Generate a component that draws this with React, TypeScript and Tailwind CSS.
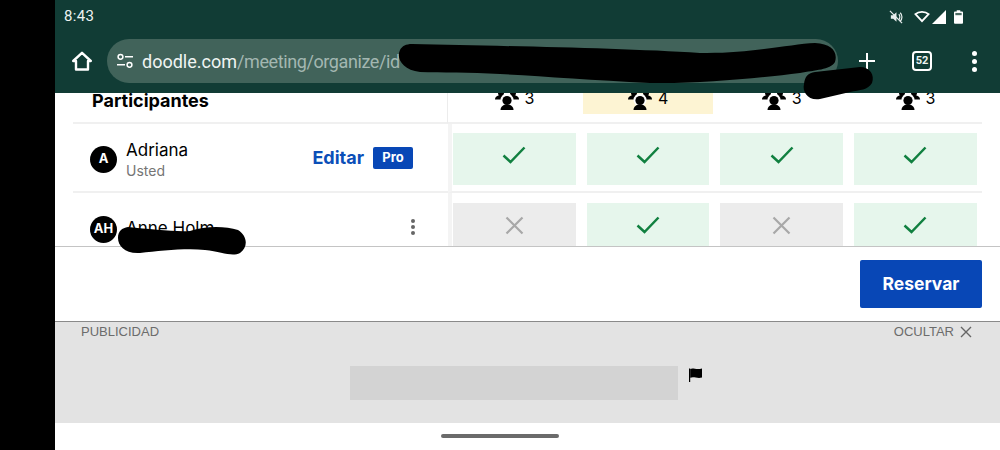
import { ReactNode } from "react";

const columns = [
  { count: 3, best: false },
  { count: 4, best: true },
  { count: 3, best: false },
  { count: 3, best: false },
];

function GroupIcon() {
  return (
    <svg width="24" height="20" viewBox="0 0 24 20" fill="#000">
      <circle cx="6" cy="3" r="3" />
      <circle cx="18" cy="3" r="3" />
      <path d="M0 9.500c0-3 3-4.500 6-4.500h12c3 0 6 1.500 6 4.500z" />
      <circle cx="12" cy="10" r="6.500" fill="#fff" />
      <circle cx="12" cy="10.500" r="4.600" />
      <path d="M5.500 20c0-3.500 3-5.500 6.500-5.500s6.500 2 6.500 5.500z" />
    </svg>
  );
}

function Check() {
  return (
    <svg width="24" height="20" viewBox="0 0 24 20" fill="none" stroke="#118040" strokeWidth="2.500">
      <path d="M1.500 10.500 L8.500 17 L22.500 2.500" />
    </svg>
  );
}

function Cross() {
  return (
    <svg width="19" height="19" viewBox="0 0 19 19" fill="none" stroke="#a8a8a8" strokeWidth="2.200">
      <path d="M1.500 1.500 L17.500 17.500 M17.500 1.500 L1.500 17.500" />
    </svg>
  );
}

function Cell({ yes }: { yes: boolean }) {
  return (
    <div className={`flex h-[52px] w-[122.67px] items-center justify-center pb-[8px] ${yes ? "bg-[#e6f6ec]" : "bg-[#ececec]"}`}>
      {yes ? <Check /> : <Cross />}
    </div>
  );
}

function Avatar({ children }: { children: ReactNode }) {
  return (
    <div className="flex h-[27px] w-[27px] shrink-0 items-center justify-center rounded-full bg-black text-[13px] font-bold text-white">
      {children}
    </div>
  );
}

function Row({ left, votes, top }: { left: ReactNode; votes: boolean[]; top: string }) {
  return (
    <div className="flex h-[69px] shrink-0">
      <div className="flex w-[375px] shrink-0 items-center border-b-2 border-[#f0f0f0] pl-[17px] pr-[35px]">{left}</div>
      <div className={`flex flex-1 gap-[11px] border-b-2 border-b-[#f0f0f0] border-l-[4px] border-l-[#f4f4f4] pl-[1px] ${top}`}>
        {votes.map((v, i) => (
          <Cell key={i} yes={v} />
        ))}
      </div>
    </div>
  );
}

function StatusIcons() {
  return (
    <div className="flex items-center gap-[2px]">
      <svg width="14" height="14" viewBox="0 0 15 15" fill="none" stroke="#e8eeee" strokeWidth="1.300" className="mr-[9px]">
        <path d="M1 1l13 13" />
        <path d="M2 5.500h2.500L8 2.500v10L4.500 9.500H2z" fill="#e8eeee" stroke="none" />
        <path d="M10.500 4.500c1.500 1.500 1.500 4.500 0 6M12 3c2.500 2.500 2.500 6.500 0 9" />
      </svg>
      <svg width="16" height="13" viewBox="0 0 17 13" fill="#113c35" stroke="#fff" strokeWidth="2">
        <path d="M1.500 4 C5 .8 12 .8 15.500 4 L8.500 11.500 Z" />
      </svg>
      <svg width="14" height="14" viewBox="0 0 14 14" fill="#fff">
        <path d="M14 0V14H0z" />
      </svg>
      <svg width="9" height="14" viewBox="0 0 10 15" fill="#fff" className="ml-[6px]">
        <path d="M3 0h4v1.500h2a1 1 0 0 1 1 1V14a1 1 0 0 1-1 1H1a1 1 0 0 1-1-1V2.500a1 1 0 0 1 1-1h2z" />
        <path d="M1.500 3h7v2.500h-7z" fill="#4a6a62" />
      </svg>
    </div>
  );
}

function Toolbar() {
  return (
    <div className="flex h-[56px] shrink-0 items-center font-['Roboto',sans-serif]">
      <svg width="20" height="20" viewBox="0 0 20 20" fill="none" stroke="#fff" strokeWidth="2.400" strokeLinejoin="round" className="ml-[17px]">
        <path d="M1.200 10 L10 1.800 L18.800 10 H16 V18.500 H4 V10 Z" />
      </svg>
      <div className="ml-[15px] flex h-[44px] w-[731px] items-center rounded-full bg-[#41635a] pl-[9px] text-[18px]">
        <svg width="18" height="16" viewBox="0 0 18 16" fill="none" stroke="#fff" strokeWidth="1.500">
          <circle cx="4.500" cy="3.800" r="2.400" />
          <path d="M9 3.800h8M1 11.800h8" />
          <circle cx="13.500" cy="11.800" r="2.400" />
        </svg>
        <span className="ml-[8px] text-[#f0f5f3]">doodle.com</span>
        <span className="tracking-[-0.4px] text-[#a3b7b1]">/meeting/organize/id</span>
      </div>
      <svg width="18" height="18" viewBox="0 0 18 18" fill="none" stroke="#fff" strokeWidth="2" className="ml-[20px]">
        <path d="M9 1v16M1 9h16" />
      </svg>
      <div className="ml-[36px] flex h-[20px] w-[20px] items-center justify-center rounded-[4px] border-2 border-white text-[11px] font-bold text-[#eef4f2]">
        52
      </div>
      <div className="ml-[40px] flex flex-col gap-[3px]">
        <span className="h-[5px] w-[5px] rounded-full bg-white" />
        <span className="h-[5px] w-[5px] rounded-full bg-white" />
        <span className="h-[5px] w-[5px] rounded-full bg-white" />
      </div>
    </div>
  );
}

export default function App() {
  return (
    <div className="relative flex h-[450px] w-[1000px] overflow-hidden bg-black font-['Inter',sans-serif]">
      <div className="w-[55px] shrink-0 bg-black" />
      <div className="flex w-[945px] flex-col bg-white">
        <div className="relative z-10 flex h-[93px] shrink-0 flex-col bg-[#113c35]">
          <div className="flex h-[33px] shrink-0 items-center justify-between pl-[9px] pr-[37px] font-['Roboto',sans-serif] text-[15px] text-[#eef3f1]">
            <span className="tracking-[0.3px]">8:43</span>
            <StatusIcons />
          </div>
          <Toolbar />
        </div>

        <div className="flex h-[153px] shrink-0 flex-col overflow-hidden pl-[18px] pr-[18px]">
          <div className="flex h-[31px] shrink-0">
            <div className="flex w-[375px] shrink-0 items-center border-b-2 border-[#f0f0f0] border-r border-r-[#ececec] pl-[19px] pb-[15px] text-[18px] font-bold text-black">
              Participantes
            </div>
            <div className="flex flex-1 gap-[3.67px] border-b-2 border-[#f0f0f0] pl-[1px]">
              {columns.map((c, i) => (
                <div
                  key={i}
                  className={`flex h-[21px] w-[130px] items-start justify-center gap-[6px] pl-[1px] text-[16px] leading-[14px] text-black ${c.best ? "bg-[#fdf4d3]" : ""}`}
                >
                  <div className="mt-[-3px]">
                    <GroupIcon />
                  </div>
                  <span className="mt-[-2px]">{c.count}</span>
                </div>
              ))}
            </div>
          </div>

          <Row
            top="items-start pt-[9px]"
            votes={[true, true, true, true]}
            left={
              <>
                <div className="mt-[3px]">
                  <Avatar>A</Avatar>
                </div>
                <div className="ml-[9px] mt-[5px] flex flex-col">
                  <span className="text-[17px] leading-[21px] text-black">Adriana</span>
                  <span className="text-[14px] leading-[20px] text-[#757575]">Usted</span>
                </div>
                <span className="ml-auto text-[18px] font-bold text-[#0b4fb8]">Editar</span>
                <span className="ml-[9px] flex h-[22px] w-[40px] items-center justify-center rounded-[2px] bg-[#0847b6] text-[13px] font-bold text-white">
                  Pro
                </span>
              </>
            }
          />
          <Row
            top="items-start pt-[10px]"
            votes={[false, true, false, true]}
            left={
              <>
                <div className="mt-[5px] flex items-center">
                  <Avatar>AH</Avatar>
                  <span className="ml-[9px] text-[17px] text-black">Anne Holm</span>
                </div>
                <div className="ml-auto mr-[-2px] mt-[1px] flex flex-col gap-[2px]">
                  <span className="h-[4px] w-[4px] rounded-full bg-[#666]" />
                  <span className="h-[4px] w-[4px] rounded-full bg-[#666]" />
                  <span className="h-[4px] w-[4px] rounded-full bg-[#666]" />
                </div>
              </>
            }
          />
        </div>

        <div className="flex h-[76px] shrink-0 items-center justify-end border-y border-t-[#c4c4c4] border-b-[#8a8a8a] pr-[18px]">
          <button className="h-[48px] w-[122px] rounded-[2px] bg-[#0847b6] text-[17.500px] font-bold text-white">Reservar</button>
        </div>

        <div className="flex h-[101px] shrink-0 flex-col bg-[#e3e3e3] px-[26px]">
          <div className="flex items-center justify-between font-['Liberation_Sans',sans-serif] text-[13px] text-[#6c6c6c]">
            <span>PUBLICIDAD</span>
            <span className="mr-[2px] flex items-center gap-[6px]">
              OCULTAR
              <svg width="12" height="12" viewBox="0 0 12 12" fill="none" stroke="#666" strokeWidth="1.400">
                <path d="M1 1l10 10M11 1L1 11" />
              </svg>
            </span>
          </div>
          <div className="mt-[24px] ml-[269px] flex items-start">
            <div className="h-[34px] w-[328px] bg-[#d3d3d3]" />
            <svg width="15" height="15" viewBox="0 0 15 15" fill="#000" className="ml-[10px] mt-[1px]">
              <path d="M1 1.500h1.200V15H1z" />
              <path d="M2.200 2c3-1.800 5.500 1.200 11.800-.5v9c-5 1.500-8-1.500-11.800.3z" />
            </svg>
          </div>
        </div>

        <div className="flex flex-1 items-start justify-center bg-white pr-[55px] pt-[11px]">
          <div className="h-[4px] w-[118px] rounded-full bg-[#6b6b6b]" />
        </div>
      </div>

      {/* redaction scribbles drawn on the screenshot */}
      <svg width="1000" height="450" viewBox="0 0 1000 450" className="pointer-events-none absolute left-0 top-0 z-20">
        <path d="M412 44 C500 46 620 48 700 53 C750 54 790 44 815 43 C832 44 838 52 835 62 C830 70 815 70 800 73 C760 78 700 84 650 83 C590 80 540 76 500 74 C470 72 440 73 420 72 C402 70 396 58 400 50 C402 46 406 44 412 44Z" fill="#000" />
        <path d="M815 72 L860 67 C870 67 875 75 872 83 C868 90 860 90 850 92 L820 99 C808 101 802 92 804 84 C805 76 808 73 815 72Z" fill="#000" />
        <path d="M128 227 C150 229 175 232 190 231 C205 226 225 226 238 230 C248 236 248 248 240 253 C232 257 222 252 205 250 C185 248 160 251 140 253 C125 254 118 246 118 238 C118 231 122 228 128 227Z" fill="#000" />
      </svg>
    </div>
  );
}
